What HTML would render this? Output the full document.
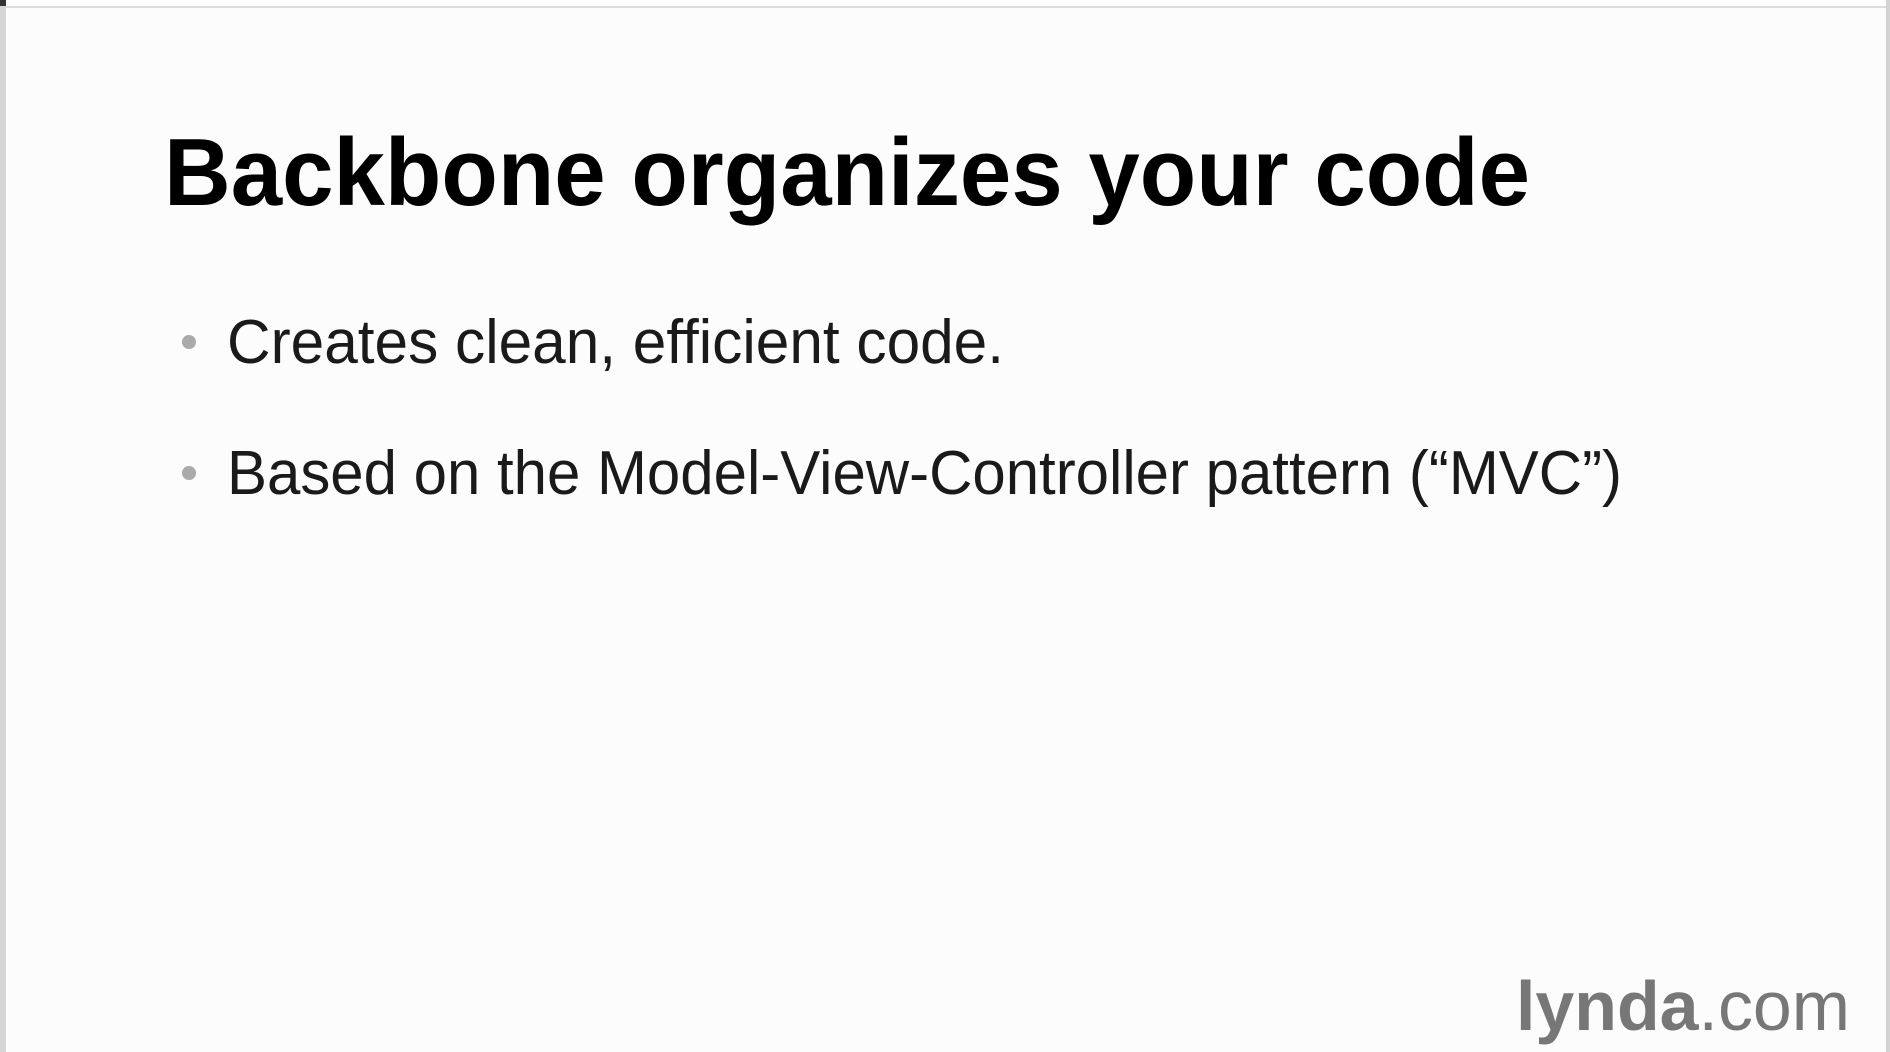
<!DOCTYPE html>
<html><head><meta charset="utf-8"><style>
html,body{margin:0;padding:0;width:1890px;height:1052px;overflow:hidden;background:#fdfcfd}
svg{position:absolute;left:0;top:0}
</style></head><body>
<svg width="1890" height="1052" viewBox="0 0 1890 1052" xmlns="http://www.w3.org/2000/svg">
<rect x="0" y="0" width="1890" height="1052" fill="#fdfcfd"/>
<rect x="0" y="0" width="1890" height="6" fill="#ffffff"/>
<rect x="0" y="6" width="1890" height="2" fill="#dcdcdc"/>
<rect x="0" y="0" width="6" height="1052" fill="#d6d6d6"/>
<rect x="0" y="0" width="6" height="6" fill="#333"/>
<rect x="1886" y="0" width="4" height="1052" fill="#d4d4d4"/>
<text x="164" y="205" font-family="Liberation Sans, sans-serif" font-weight="bold" font-size="96" fill="#000" textLength="1366" lengthAdjust="spacingAndGlyphs">Backbone organizes your code</text>
<circle cx="189" cy="342" r="7" fill="#aaa"/>
<text x="227" y="363" font-family="Liberation Sans, sans-serif" font-size="62" fill="#1a1a1a" textLength="777" lengthAdjust="spacingAndGlyphs">Creates clean, efficient code.</text>
<circle cx="189" cy="473" r="7" fill="#aaa"/>
<text x="227" y="494" font-family="Liberation Sans, sans-serif" font-size="62" fill="#1a1a1a" textLength="1395" lengthAdjust="spacingAndGlyphs">Based on the Model-View-Controller pattern (“MVC”)</text>
<text x="1516" y="1030" font-family="Liberation Sans, sans-serif" font-size="70" fill="#777" textLength="334" lengthAdjust="spacingAndGlyphs"><tspan font-weight="bold">lynda</tspan>.com</text>
</svg>
</body></html>
